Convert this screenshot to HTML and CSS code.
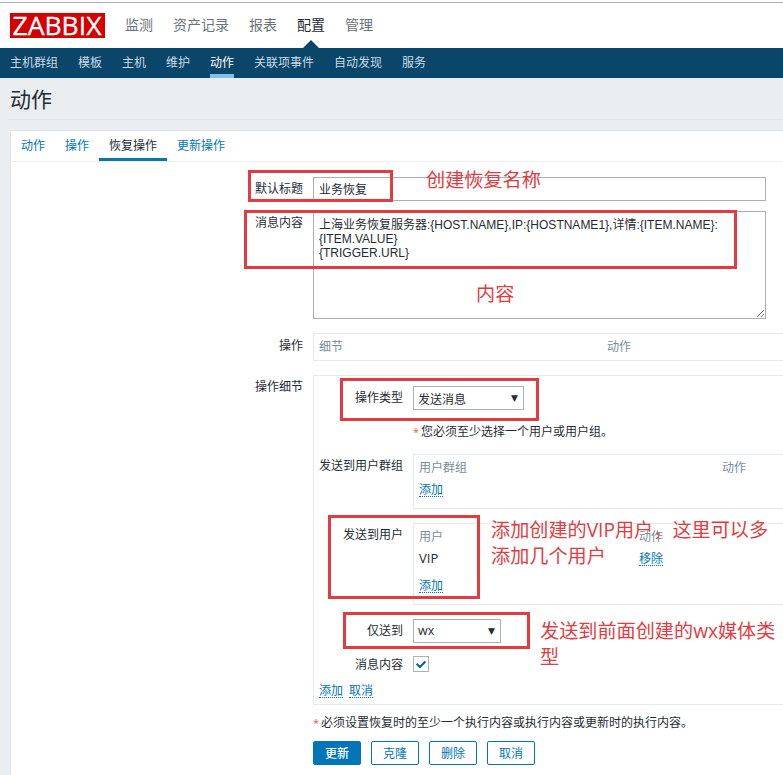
FILE: index.html
```html
<!DOCTYPE html>
<html lang="zh-CN">
<head>
<meta charset="utf-8">
<title>动作</title>
<link rel="stylesheet" href="styles.css">
</head>
<body>
<div class="page">
  <header class="top">
    <svg class="logo" width="95" height="25" viewBox="0 0 95 25" role="img" aria-label="ZABBIX"><rect width="95" height="25" fill="#d40000"/><text x="2.5" y="21.8" textLength="89" lengthAdjust="spacingAndGlyphs" class="logo-text">ZABBIX</text></svg>
    <nav class="menu"><a>监测</a><a>资产记录</a><a>报表</a><a class="current">配置</a><a>管理</a></nav>
  </header>
  <nav class="submenu"><a>主机群组</a><a>模板</a><a>主机</a><a>维护</a><a class="current">动作</a><a>关联项事件</a><a>自动发现</a><a>服务</a></nav>
  <h1 class="title">动作</h1>
  <main class="card">
    <div class="tabs"><a>动作</a><a>操作</a><a class="current">恢复操作</a><a>更新操作</a></div>
    <form class="form">
      <div class="row row-subject"><label>默认标题</label><input class="field" type="text" value="业务恢复"></div>
      <div class="row row-message"><label>消息内容</label><textarea class="field">上海业务恢复服务器:{HOST.NAME},IP:{HOSTNAME1},详情:{ITEM.NAME}:
{ITEM.VALUE}
{TRIGGER.URL}</textarea></div>
      <div class="row row-ops"><label>操作</label><div class="box ops"><span>细节</span><span>动作</span></div></div>
      <div class="row row-details"><label>操作细节</label>
        <div class="box details">
          <div class="sub row-type"><label>操作类型</label><div class="select type">发送消息<i>▼</i></div></div>
          <p class="note inner"><b>*</b>您必须至少选择一个用户或用户组。</p>
          <div class="sub row-groups"><label>发送到用户群组</label>
            <div class="box table groups"><span class="head">用户群组</span><span class="head">动作</span><span><a class="link">添加</a></span></div></div>
          <div class="sub row-users"><label>发送到用户</label>
            <div class="box table users"><span class="head">用户</span><span class="head over">动作</span><span class="name">VIP</span><span><a class="link">移除</a></span><span><a class="link">添加</a></span></div></div>
          <div class="sub row-media"><label>仅送到</label><div class="select media">wx<i>▼</i></div></div>
          <div class="sub row-check"><label>消息内容</label><span class="check"><svg width="14" height="14" viewBox="0 0 14 14"><path d="M2.6 6.8 L5.9 10 L11.4 4.5" fill="none" stroke="#0a5f96" stroke-width="2"/></svg></span></div>
          <div class="links"><a class="link">添加</a><a class="link">取消</a></div>
        </div>
      </div>
      <p class="note outer"><b>*</b>必须设置恢复时的至少一个执行内容或执行内容或更新时的执行内容。</p>
      <div class="buttons"><button type="button" class="primary">更新</button><button type="button">克隆</button><button type="button">删除</button><button type="button">取消</button></div>
    </form>
  </main>
  <div class="mark mark-subject"></div>
  <div class="mark mark-message"></div>
  <div class="mark mark-type"></div>
  <div class="mark mark-users"></div>
  <div class="mark mark-media"></div>
  <div class="hint hint-subject">创建恢复名称</div>
  <div class="hint hint-message">内容</div>
  <div class="hint hint-users">添加创建的VIP用户，这里可以多<br>添加几个用户</div>
  <div class="hint hint-media">发送到前面创建的wx媒体类<br>型</div>
</div>
</body>
</html>
```
FILE: styles.css
```css
* { box-sizing: border-box; }
body { margin: 0; background: #fff; }
.page {
  position: relative; width: 783px; height: 775px; overflow: hidden;
  background: #ebeef0; color: #1f2c33;
  font: 12px/16px "Open Sans", "Noto Sans CJK SC", sans-serif;
}
.page::before { content: ""; display: block; height: 2px; background: #fff; }
.top { display: flex; height: 46px; padding: 10px 0 0 10px; background: #fff; border-top: 1px solid #b0b0b4; }
.logo { display: block; overflow: visible; }
.logo-text { font: 26px "Open Sans", sans-serif; fill: #fff; stroke: #fff; stroke-width: .3; }
.menu { display: flex; gap: 20px; margin-left: 20px; font-size: 14px; line-height: 24px; color: #6b7379; }
.menu .current { position: relative; color: #1f2c33; }
.menu .current::after {
  content: ""; position: absolute; left: 6px; bottom: 0;
  border: 8px solid transparent; border-top: 0; border-bottom-color: #0a466a;
}
.submenu { display: flex; gap: 20px; height: 30px; padding-left: 10px; line-height: 30px; color: #c9dbe6; background: #0a466a; }
.submenu .current { color: #fff; border-bottom: 4px solid #82c0e8; }
.title { height: 42px; margin: 0 0 10px 8px; padding-left: 2px; font-size: 21px; font-weight: 400; line-height: 43px; border-bottom: 1px solid #dfe4e7; }
.card { margin-left: 10px; height: 660px; background: #fff; border: 1px solid #dfe4e7; border-right: 0; }
.tabs { display: flex; height: 31px; line-height: 30px; color: #0275b8; border-bottom: 1px solid #ebeef0; }
.tabs a { padding: 0 10px; }
.tabs .current { color: #1f2c33; border-bottom: 3px solid #0f75a8; }
.form { padding-top: 15px; }
.row { display: flex; }
.row > label { flex: none; width: 292px; margin-right: 10px; text-align: right; }
.field { width: 453px; margin: 0; padding: 4px 5px; border: 1px solid #acb0b3; border-radius: 0; background: #fff; color: #1f2c33; font: 12px/14px "Liberation Sans", "Noto Sans CJK SC", sans-serif; outline: 0; }
.row-subject { height: 34px; }
.row-subject label { padding-top: 4px; }
.row-subject .field { height: 24px; padding: 3px 5px 5px; }
.row-message { height: 122px; }
.row-message label { padding-top: 4px; }
.row-message .field { height: 108px; padding-top: 6px; }
.box { border: 1px solid #e5eaed; border-right: 0; }
.row-ops { height: 42px; }
.row-ops label { padding-top: 5px; }
.ops { display: flex; flex: 1; height: 28px; padding-left: 5px; line-height: 26px; color: #768d99; }
.ops span { width: 288px; flex: none; }
.ops span + span { width: auto; }
.row-details { height: 330px; }
.row-details > label { padding-top: 4px; }
.details { flex: 1; height: 330px; }
.sub { display: flex; }
.sub > label { flex: none; width: 89px; margin-right: 10px; text-align: right; }
.select { position: relative; height: 24px; padding-left: 4px; line-height: 25px; border: 1px solid #acb0b3; }
.select i { position: absolute; right: 5px; top: -1px; font: 9px/24px "DejaVu Sans", sans-serif; }
.type { width: 111px; }
.media { width: 88px; line-height: 22px; font-size: 12.5px; }
.row-type { padding-top: 10px; height: 34px; }
.row-type label { padding-top: 4px; }
.note { margin: 0; white-space: nowrap; }
.note b { display: inline-block; width: 8px; font-weight: 400; font-size: 11px; color: #e45959; }
.inner { margin: 14px 0 0 99px; height: 30px; }
.row-groups { height: 69px; }
.row-groups label { padding-top: 4px; }
.table { display: grid; flex: 1; padding-left: 5px; }
.groups { height: 55px; padding-top: 5px; grid-template-columns: 303px 1fr; grid-template-rows: 22px 22px; }
.head { color: #768d99; }
.name { font-size: 13px; margin-top: -1px; }
.row-users { height: 96px; }
.row-users label { padding-top: 4px; }
.users { height: 82px; padding-top: 5px; grid-template-columns: 220px 1fr; grid-template-rows: 22px 27px 22px; }
.over { position: relative; z-index: 2; }
.row-media { height: 37px; }
.row-media label { padding-top: 4px; }
.row-check { height: 27px; }
.row-check label { padding-top: 1px; }
.check { width: 16px; height: 16px; border: 1px solid #acb0b3; }
.check svg { display: block; }
.link { display: inline-block; height: 15px; color: #0275b8; border-bottom: 1px dotted #0275b8; }
.links { display: flex; gap: 6px; padding-left: 5px; }
.outer { margin: 10px 0 0 302px; height: 26px; }
.buttons { display: flex; gap: 10px; margin-left: 302px; }
.buttons button { width: 48px; height: 24px; padding: 1px 0 0; border: 1px solid #0275b8; border-radius: 2px; background: #fff; color: #0275b8; font: inherit; line-height: 22px; }
.buttons .primary { background: #0275b8; color: #fff; font-weight: 500; }
.mark { position: absolute; border: 3px solid #e23c42; }
.mark-subject { left: 248px; top: 170px; width: 145px; height: 32px; }
.mark-message { left: 244px; top: 210px; width: 493px; height: 59px; }
.mark-type { left: 340px; top: 378px; width: 199px; height: 43px; }
.mark-users { left: 328px; top: 515px; width: 152px; height: 84px; }
.mark-media { left: 343px; top: 612px; width: 187px; height: 37px; }
.hint { position: absolute; font-size: 19.15px; line-height: 26px; color: #e23c42; white-space: nowrap; }
.hint-subject { left: 426px; top: 167px; }
.hint-message { left: 476px; top: 281px; }
.hint-users { left: 491px; top: 517px; }
.hint-media { left: 540px; top: 618px; }
```
